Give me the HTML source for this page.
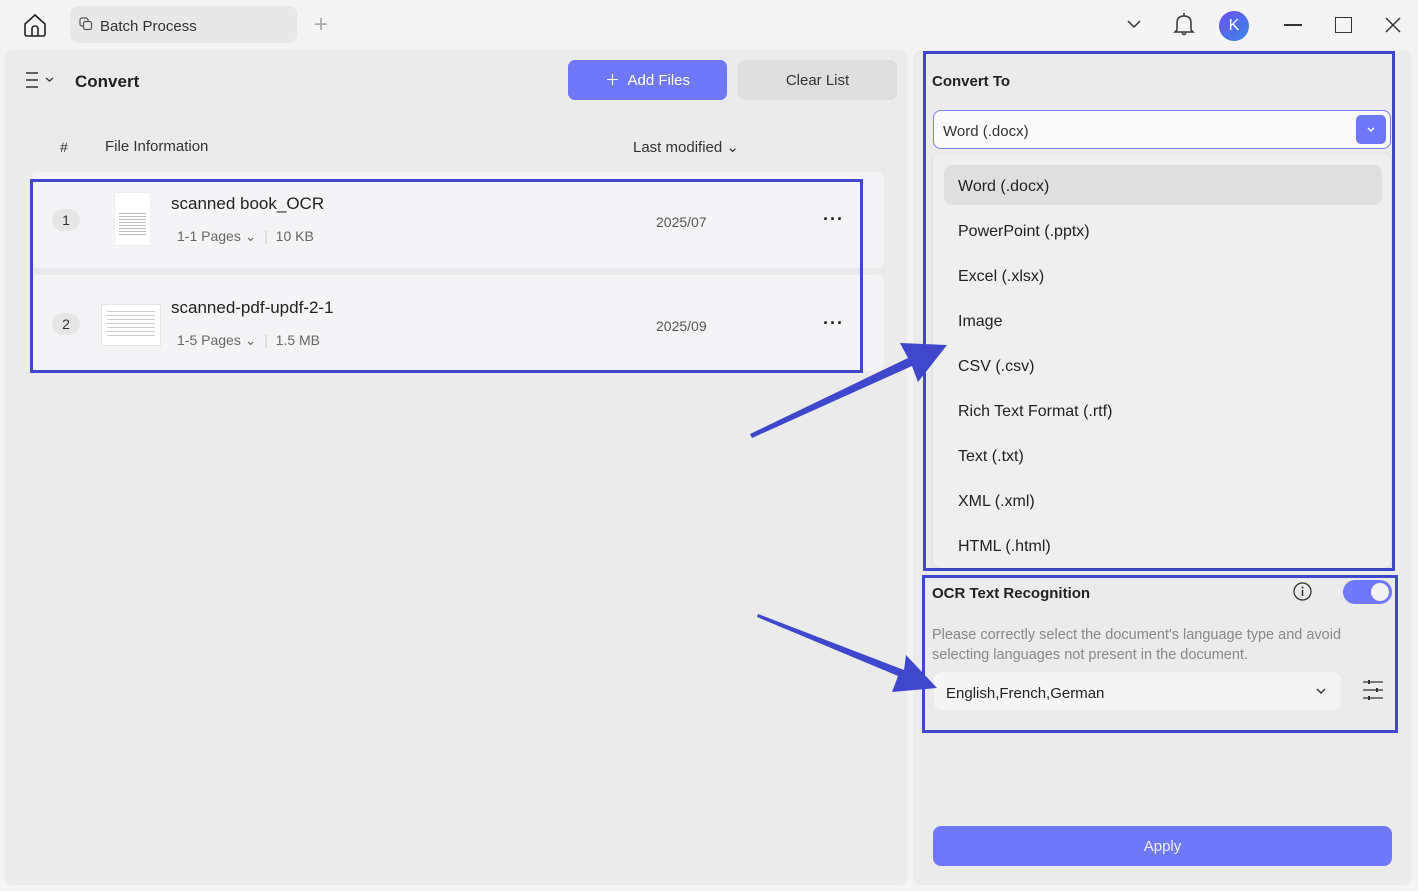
<!DOCTYPE html>
<html><head><meta charset="utf-8"><style>
*{box-sizing:border-box;margin:0;padding:0}
body{width:1418px;height:891px;background:#f4f4f4;font-family:"Liberation Sans",sans-serif;color:#222;position:relative;overflow:hidden}
.a{position:absolute}
.panel{background:#ebebeb;border-radius:8px}
.box{border:3px solid #3f48cc}
.opt{position:absolute;left:958px;font-size:16px;color:#222}
</style></head><body>
<svg class="a" style="left:22px;top:12px" width="26" height="26" viewBox="0 0 26 26"><path d="M3 12 L13 3 L23 12 V22 Q23 24 21 24 H5 Q3 24 3 22 Z M10 24 V17 Q10 14 13 14 Q16 14 16 17 V24" fill="none" stroke="#222" stroke-width="1.6"/></svg>
<div class="a" style="left:70px;top:6px;width:227px;height:37px;background:#e8e8e8;border-radius:8px"></div>
<svg class="a" style="left:79px;top:17px" width="14" height="14"><rect x="1" y="1" width="8" height="8" rx="2" fill="none" stroke="#555" stroke-width="1.2"/><rect x="4.5" y="4.5" width="8" height="8" rx="2" fill="#e8e8e8" stroke="#555" stroke-width="1.2"/></svg>
<div class="a" style="left:100px;top:18px;font-size:15px;color:#333">Batch Process</div>
<div class="a" style="left:314px;top:11px;font-size:24px;color:#aaa;font-weight:300">+</div>
<svg class="a" style="left:1126px;top:18px" width="16" height="12"><path d="M2 3 L8 9 L14 3" fill="none" stroke="#333" stroke-width="1.5"/></svg>
<svg class="a" style="left:1172px;top:11px" width="24" height="27"><path d="M5 19 V12 Q5 5 12 5 Q19 5 19 12 V19 L21 21 H3 Z M10 22 Q12 25 14 22 M12 2 V5" fill="none" stroke="#333" stroke-width="1.5"/></svg>
<div class="a" style="left:1219px;top:11px;width:30px;height:30px;border-radius:50%;background:linear-gradient(135deg,#6a4ef0,#3a8ae8);color:#fff;font-size:16px;text-align:center;line-height:30px">K</div>
<div class="a" style="left:1284px;top:24px;width:18px;height:1.5px;background:#333"></div>
<div class="a" style="left:1335px;top:17px;width:17px;height:16px;border:1.5px solid #333"></div>
<svg class="a" style="left:1384px;top:16px" width="18" height="18"><path d="M2 2 L16 16 M16 2 L2 16" stroke="#333" stroke-width="1.5"/></svg>
<div class="a panel" style="left:5px;top:50px;width:902px;height:835px"></div>
<svg class="a" style="left:25px;top:71px" width="32" height="18"><path d="M1 2 H13 M1 9 H13 M1 16 H13" stroke="#333" stroke-width="1.4"/><path d="M21 7 L24.5 10 L28 7" fill="none" stroke="#333" stroke-width="1.3"/></svg>
<div class="a" style="left:75px;top:72px;font-size:17px;font-weight:bold">Convert</div>
<div class="a" style="left:568px;top:60px;width:159px;height:40px;background:#6f78f7;border-radius:7px;color:#fff;font-size:15px;line-height:41px;text-align:center">＋&nbsp; Add Files</div>
<div class="a" style="left:738px;top:60px;width:159px;height:40px;background:#dedede;border-radius:7px;color:#333;font-size:15px;line-height:41px;text-align:center">Clear List</div>
<div class="a" style="left:60px;top:139px;font-size:14px;color:#333">#</div>
<div class="a" style="left:105px;top:138px;font-size:15px;color:#333">File Information</div>
<div class="a" style="left:633px;top:138px;font-size:15px;color:#333">Last modified ⌄</div>
<div class="a" style="left:30px;top:172px;width:854px;height:96px;background:#f4f4f6;border-radius:8px"></div>
<div class="a" style="left:30px;top:275px;width:854px;height:96px;background:#f4f4f6;border-radius:8px"></div>
<div class="a box" style="left:30px;top:179px;width:833px;height:194px"></div>
<div class="a" style="left:33px;top:268px;width:827px;height:6px;background:#e8e8ea"></div>
<div class="a" style="left:52px;top:209px;width:28px;height:22px;border-radius:11px;background:#e6e6e6;font-size:14px;text-align:center;line-height:22px;color:#333">1</div>
<div class="a" style="left:52px;top:313px;width:28px;height:22px;border-radius:11px;background:#e6e6e6;font-size:14px;text-align:center;line-height:22px;color:#333">2</div>
<div class="a" style="left:114px;top:192px;width:37px;height:54px;background:#fff;border:1px solid #eee"><div style="margin:20px 4px 0;height:22px;background:repeating-linear-gradient(#bbb 0 1px,transparent 1px 3px)"></div></div>
<div class="a" style="left:101px;top:304px;width:60px;height:42px;background:#fff;border:1px solid #e5e5e5"><div style="margin:6px 5px;height:28px;background:repeating-linear-gradient(#ccc 0 1px,transparent 1px 4px)"></div></div>
<div class="a" style="left:171px;top:194px;font-size:17px">scanned book_OCR</div>
<div class="a" style="left:177px;top:228px;font-size:14px;color:#666">1-1 Pages ⌄ &nbsp;<span style="color:#ccc">|</span>&nbsp; 10 KB</div>
<div class="a" style="left:171px;top:298px;font-size:17px">scanned-pdf-updf-2-1</div>
<div class="a" style="left:177px;top:332px;font-size:14px;color:#666">1-5 Pages ⌄ &nbsp;<span style="color:#ccc">|</span>&nbsp; 1.5 MB</div>
<div class="a" style="left:656px;top:214px;font-size:14px;color:#555">2025/07</div>
<div class="a" style="left:656px;top:318px;font-size:14px;color:#555">2025/09</div>
<div class="a" style="left:823px;top:209px;font-size:18px;font-weight:bold;letter-spacing:1px">···</div>
<div class="a" style="left:823px;top:313px;font-size:18px;font-weight:bold;letter-spacing:1px">···</div>
<div class="a panel" style="left:913px;top:50px;width:498px;height:835px"></div>
<div class="a box" style="left:923px;top:51px;width:472px;height:520px"></div>
<div class="a" style="left:932px;top:73px;font-size:15px;font-weight:bold">Convert To</div>
<div class="a" style="left:933px;top:110px;width:458px;height:39px;background:#fafafa;border:1px solid #7a80f0;border-radius:8px"></div>
<div class="a" style="left:943px;top:123px;font-size:15px;color:#333">Word (.docx)</div>
<div class="a" style="left:1356px;top:115px;width:30px;height:29px;background:#6f78f7;border-radius:5px"><svg width="30" height="29"><path d="M12 13 L15 16 L18 13" fill="none" stroke="#fff" stroke-width="1.4"/></svg></div>
<div class="a" style="left:933px;top:154px;width:458px;height:414px;background:#efefef;border-radius:8px;box-shadow:0 1px 4px rgba(0,0,0,.1)"></div>
<div class="a" style="left:944px;top:165px;width:438px;height:40px;background:#dfdfdf;border-radius:8px"></div>
<div class="opt" style="top:178px">Word (.docx)</div>
<div class="opt" style="top:223px">PowerPoint (.pptx)</div>
<div class="opt" style="top:268px">Excel (.xlsx)</div>
<div class="opt" style="top:313px">Image</div>
<div class="opt" style="top:358px">CSV (.csv)</div>
<div class="opt" style="top:403px">Rich Text Format (.rtf)</div>
<div class="opt" style="top:448px">Text (.txt)</div>
<div class="opt" style="top:493px">XML (.xml)</div>
<div class="opt" style="top:538px">HTML (.html)</div>
<div class="a box" style="left:922px;top:575px;width:476px;height:158px"></div>
<div class="a" style="left:932px;top:585px;font-size:15px;font-weight:bold">OCR Text Recognition</div>
<svg class="a" style="left:1292px;top:581px" width="21" height="21"><circle cx="10.5" cy="10.5" r="8.5" fill="none" stroke="#333" stroke-width="1.3"/><path d="M10.5 9 V15" stroke="#333" stroke-width="1.5"/><circle cx="10.5" cy="6.5" r="1" fill="#333"/></svg>
<div class="a" style="left:1343px;top:580px;width:49px;height:24px;border-radius:12px;background:#6f78f7"><div style="position:absolute;right:3px;top:3px;width:18px;height:18px;border-radius:50%;background:#f2f2f2"></div></div>
<div class="a" style="left:932px;top:625px;width:440px;font-size:14.5px;line-height:20px;color:#888">Please correctly select the document's language type and avoid selecting languages not present in the document.</div>
<div class="a" style="left:934px;top:672px;width:407px;height:38px;background:#f5f5f5;border-radius:8px"></div>
<div class="a" style="left:946px;top:685px;font-size:15px;color:#222">English,French,German</div>
<svg class="a" style="left:1314px;top:686px" width="14" height="10"><path d="M3 3 L7 7 L11 3" fill="none" stroke="#333" stroke-width="1.4"/></svg>
<svg class="a" style="left:1362px;top:679px" width="22" height="24"><path d="M1 3 H21 M1 11 H21 M1 19 H21" stroke="#333" stroke-width="1.3"/><path d="M7 1 V5 M15 9 V13 M7 17 V21" stroke="#333" stroke-width="2"/></svg>
<div class="a" style="left:933px;top:826px;width:459px;height:40px;background:#6f78f7;border-radius:8px;color:#eef;font-size:15px;line-height:42px;text-align:center">Apply</div>
<svg class="a" style="left:0;top:0" width="1418" height="891"><polygon points="752,438 912,366 918,382 947,345 900,343 908,358 750,434" fill="#3f48cc"/><polygon points="757,617 898,676 892,692 937,688 906,655 904,670 758,614" fill="#3f48cc"/></svg>
</body></html>
